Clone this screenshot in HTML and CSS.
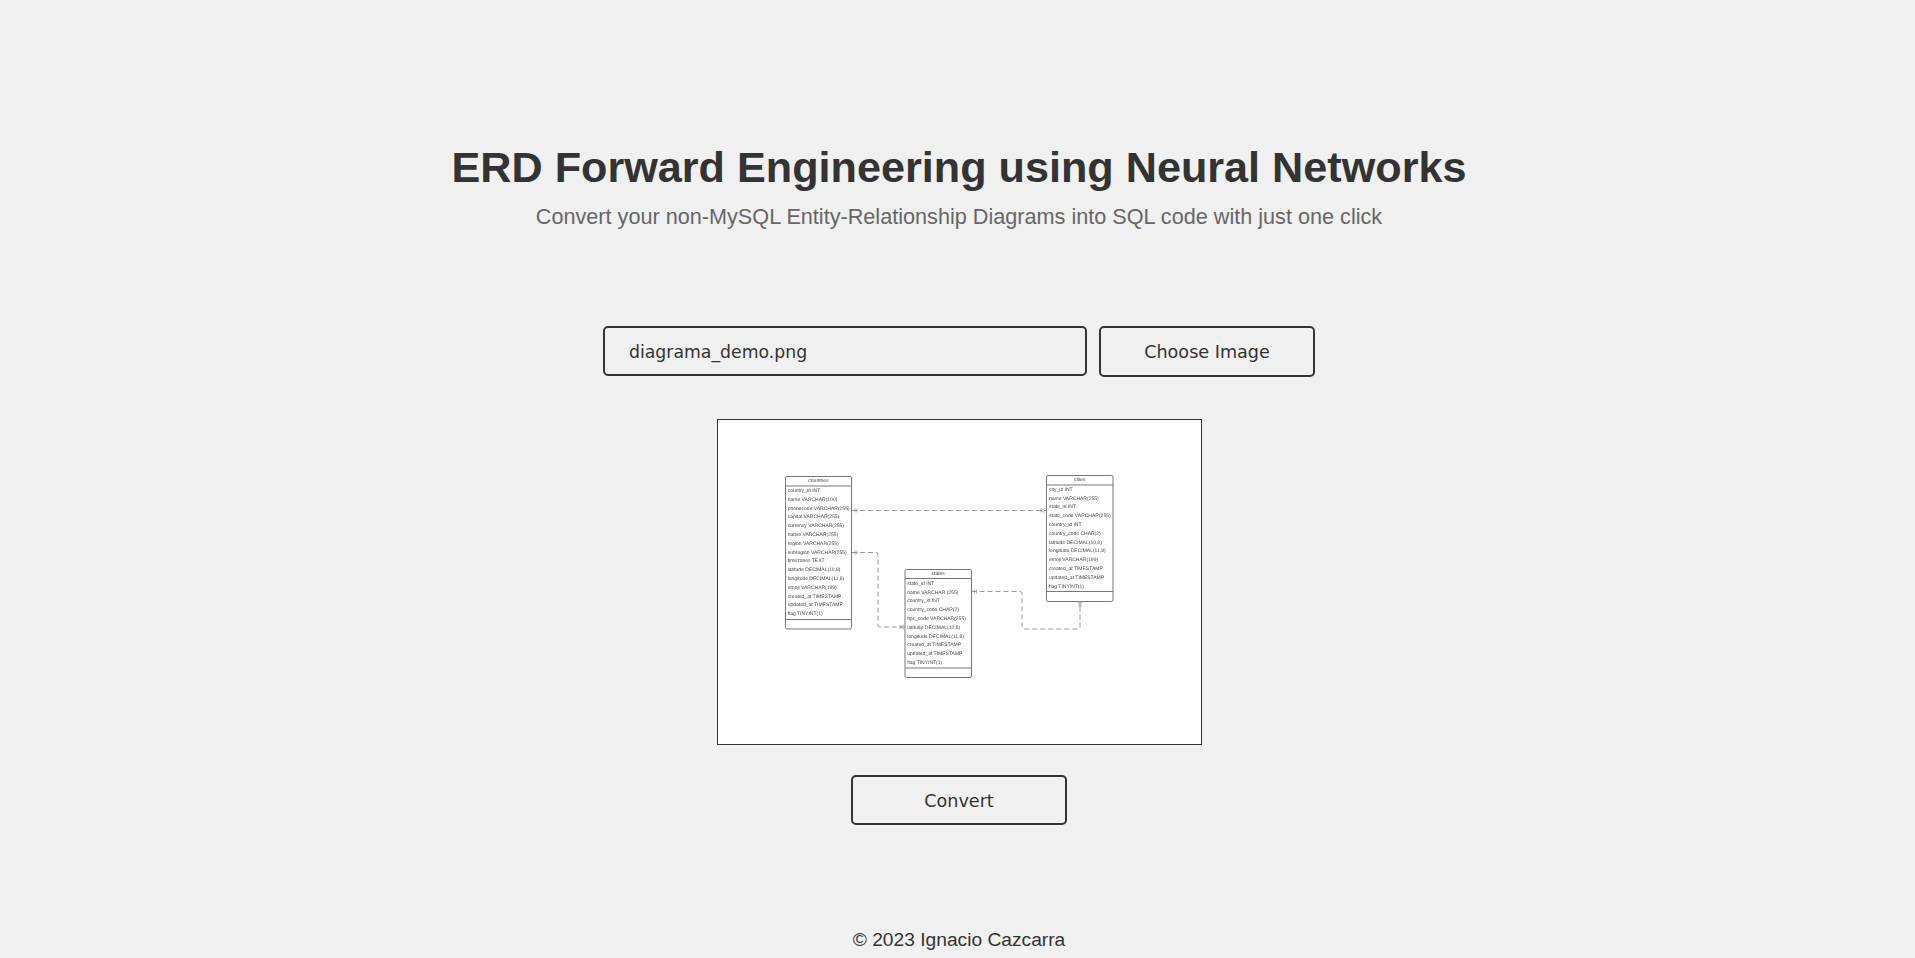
FILE: index.html
```html
<!DOCTYPE html>
<html>
<head>
    <title>ERD Forward Engineering</title>
    <link rel="stylesheet" href="styles.css">
</head>
<body>
<div id="container">
    <header class="intro">
        <h1>ERD Forward Engineering using Neural Networks</h1>
        <p class="subtitle">Convert your non-MySQL Entity-Relationship Diagrams into SQL code with just one click</p>
    </header>

    <div class="picker">
        <div class="file-name">diagrama_demo.png</div>
        <button class="btn btn-choose">Choose Image</button>
    </div>

    <div class="preview">
        <svg class="diagram" width="483" height="324" viewBox="718 420 483 324">
            <g class="links">
                <path d="M852 510.5H1046"/>
                <path d="M852 552.5H876q2 0 2 2V625q0 2 2 2H905"/>
                <path d="M971.5 591.5H1020q2 0 2 2V627q0 2 2 2H1078q2 0 2-2V601.5"/>
            </g>
            <g class="marks">
                <path d="M855 508.5v4M857 508.5v4M1041 508.5v4M1041 510.5l4-2M1041 510.5l4 2"/>
                <path d="M855 550.5v4M857 550.5v4M900 625v4M900 627l4-2M900 627l4 2"/>
                <path d="M974.5 589.5v4M976.5 589.5v4M1078 606h4M1080 606l-2-4M1080 606l2-4"/>
            </g>
            <g class="entity">
                <rect x="785.5" y="476.5" width="66" height="152.5" rx="1.5"/>
                <path d="M785.5 486H851.5M785.5 619.5H851.5"/>
                <rect x="1046.5" y="475.5" width="66.5" height="126" rx="1.5"/>
                <path d="M1046.5 485H1113M1046.5 591.5H1113"/>
                <rect x="905" y="569.5" width="66.5" height="108" rx="1.5"/>
                <path d="M905 578.5H971.5M905 668H971.5"/>
            </g>
            <g class="entity-text">
                <text class="entity-title" x="818.5" y="482.4">countries</text>
                <text x="787.7" y="492">country_id INT</text>
                <text x="787.7" y="500.8">name VARCHAR(100)</text>
                <text x="787.7" y="509.6">phonecode VARCHAR(255)</text>
                <text x="787.7" y="518.4">capital VARCHAR(255)</text>
                <text x="787.7" y="527.2">currency VARCHAR(255)</text>
                <text x="787.7" y="536">native VARCHAR(255)</text>
                <text x="787.7" y="544.8">region VARCHAR(255)</text>
                <text x="787.7" y="553.6">subregion VARCHAR(255)</text>
                <text x="787.7" y="562.4">timezones TEXT</text>
                <text x="787.7" y="571.2">latitude DECIMAL(10,8)</text>
                <text x="787.7" y="580">longitude DECIMAL(11,8)</text>
                <text x="787.7" y="588.8">emoji VARCHAR(199)</text>
                <text x="787.7" y="597.6">created_at TIMESTAMP</text>
                <text x="787.7" y="606.4">updated_at TIMESTAMP</text>
                <text x="787.7" y="615.2">flag TINYINT(1)</text>

                <text class="entity-title" x="1079.7" y="481.4">cities</text>
                <text x="1049" y="490.7">city_id INT</text>
                <text x="1049" y="499.5">name VARCHAR(255)</text>
                <text x="1049" y="508.3">state_id INT</text>
                <text x="1049" y="517.1">state_code VARCHAR(255)</text>
                <text x="1049" y="525.9">country_id INT</text>
                <text x="1049" y="534.7">country_code CHAR(2)</text>
                <text x="1049" y="543.5">latitude DECIMAL(10,8)</text>
                <text x="1049" y="552.3">longitude DECIMAL(11,8)</text>
                <text x="1049" y="561.1">emoji VARCHAR(199)</text>
                <text x="1049" y="569.9">created_at TIMESTAMP</text>
                <text x="1049" y="578.7">updated_at TIMESTAMP</text>
                <text x="1049" y="587.5">flag TINYINT(1)</text>

                <text class="entity-title" x="938.2" y="575.4">states</text>
                <text x="907.3" y="584.7">state_id INT</text>
                <text x="907.3" y="593.5">name VARCHAR (255)</text>
                <text x="907.3" y="602.3">country_id INT</text>
                <text x="907.3" y="611.1">country_code CHAR(2)</text>
                <text x="907.3" y="619.9">fips_code VARCHAR(255)</text>
                <text x="907.3" y="628.7">latitude DECIMAL(10,8)</text>
                <text x="907.3" y="637.5">longitude DECIMAL(11,8)</text>
                <text x="907.3" y="646.3">created_at TIMESTAMP</text>
                <text x="907.3" y="655.1">updated_at TIMESTAMP</text>
                <text x="907.3" y="663.9">flag TINYINT(1)</text>
            </g>
        </svg>
    </div>

    <button class="btn btn-convert">Convert</button>

    <footer class="footer">© 2023 Ignacio Cazcarra</footer>
</div>
</body>
</html>
```

FILE: styles.css
```css
html, body {
    height: 100%;
}

body {
    margin: 0;
    padding: 0;
    overflow: hidden;
    background-color: #f0f0f0;
    color: #333;
    font-family: "Liberation Sans", Arial, sans-serif;
}

#container {
    display: flex;
    flex-direction: column;
    align-items: center;
    padding-left: 3px;
}

.intro {
    padding-top: 142px;
    text-align: center;
}

h1 {
    margin: 0;
    font-size: 43.2px;
    line-height: 50px;
    font-weight: bold;
}

.subtitle {
    margin: 12px 0 0;
    font-size: 21.65px;
    line-height: 26px;
    color: #666;
}

.picker {
    display: flex;
    align-items: flex-start;
    gap: 12px;
    margin-top: 96px;
}

.file-name, .btn {
    box-sizing: border-box;
    border: 2px solid #333;
    border-radius: 5px;
    background-color: #f0f0f0;
    color: #333;
    font-family: "DejaVu Sans", sans-serif;
    font-size: 17.6px;
}

.file-name {
    width: 484px;
    height: 50px;
    padding-left: 24px;
    font-size: 17.3px;
    line-height: 48px;
}

.btn {
    width: 216px;
    height: 50px;
    padding: 0;
    cursor: pointer;
}

.btn-choose {
    height: 51px;
}

.preview {
    box-sizing: border-box;
    width: 485px;
    height: 326px;
    margin-top: 42px;
    border: 1px solid #333;
    background-color: #fff;
}

.diagram {
    display: block;
}

.links path {
    fill: none;
    stroke: #999;
    stroke-width: 1;
    stroke-dasharray: 5 3;
}

.marks path {
    fill: none;
    stroke: #888;
    stroke-width: 0.7;
}

.entity rect, .entity path {
    fill: none;
    stroke: #777;
    stroke-width: 1;
}

.entity-text {
    font-size: 5px;
    fill: #444;
    text-rendering: geometricPrecision;
    filter: blur(0.15px);
}

.entity-title {
    text-anchor: middle;
}

.btn-convert {
    margin-top: 30px;
    padding-top: 2px;
}

.footer {
    margin-top: 104px;
    font-size: 19.2px;
    line-height: 22px;
}
```
